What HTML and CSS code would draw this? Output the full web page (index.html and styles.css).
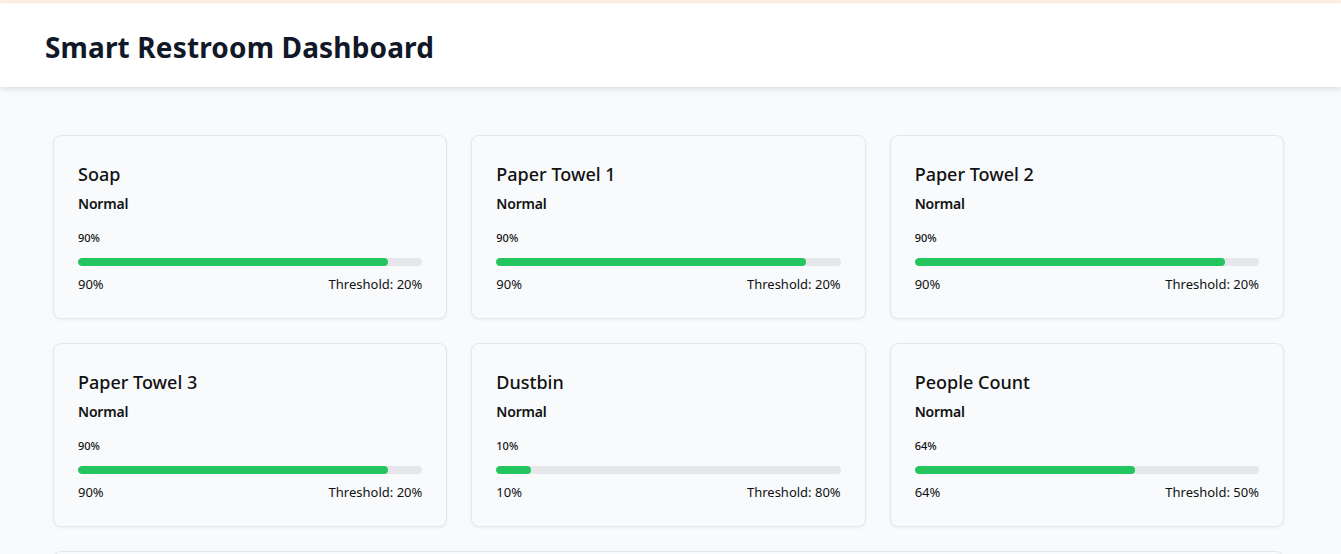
FILE: index.html
```html
<!DOCTYPE html>
<html lang="en">
<head>
<meta charset="utf-8">
<title>Smart Restroom Dashboard</title>
<link rel="stylesheet" href="styles.css">
</head>
<body>
<div class="topline"></div>
<header class="header">
  <h1 class="title">Smart Restroom Dashboard</h1>
</header>
<main class="main">
  <section class="grid">
    <div class="card">
      <h2 class="card-title">Soap</h2>
      <div class="status">Normal</div>
      <div class="value">90%</div>
      <div class="bar"><div class="fill" style="width:90%"></div></div>
      <div class="meta"><span>90%</span><span>Threshold: 20%</span></div>
    </div>
    <div class="card">
      <h2 class="card-title">Paper Towel 1</h2>
      <div class="status">Normal</div>
      <div class="value">90%</div>
      <div class="bar"><div class="fill" style="width:90%"></div></div>
      <div class="meta"><span>90%</span><span>Threshold: 20%</span></div>
    </div>
    <div class="card">
      <h2 class="card-title">Paper Towel 2</h2>
      <div class="status">Normal</div>
      <div class="value">90%</div>
      <div class="bar"><div class="fill" style="width:90%"></div></div>
      <div class="meta"><span>90%</span><span>Threshold: 20%</span></div>
    </div>
    <div class="card">
      <h2 class="card-title">Paper Towel 3</h2>
      <div class="status">Normal</div>
      <div class="value">90%</div>
      <div class="bar"><div class="fill" style="width:90%"></div></div>
      <div class="meta"><span>90%</span><span>Threshold: 20%</span></div>
    </div>
    <div class="card">
      <h2 class="card-title">Dustbin</h2>
      <div class="status">Normal</div>
      <div class="value">10%</div>
      <div class="bar"><div class="fill" style="width:10%"></div></div>
      <div class="meta"><span>10%</span><span>Threshold: 80%</span></div>
    </div>
    <div class="card">
      <h2 class="card-title">People Count</h2>
      <div class="status">Normal</div>
      <div class="value">64%</div>
      <div class="bar"><div class="fill" style="width:64%"></div></div>
      <div class="meta"><span>64%</span><span>Threshold: 50%</span></div>
    </div>
  </section>
  <section class="panel"></section>
</main>
</body>
</html>
```

FILE: styles.css
```css
* { box-sizing: border-box; }
html, body { margin: 0; padding: 0; }
body {
  background: #f8fafc;
  font-family: "Noto Sans", "Open Sans", sans-serif;
  color: #111;
  overflow: hidden;
}
.topline {
  height: 3px;
  background: #fdf0e6;
}
.header {
  background: #ffffff;
  height: 84px;
  display: flex;
  align-items: center;
  padding: 4px 45px 0;
  box-shadow: 0 2px 6px rgba(0, 0, 0, 0.12);
  position: relative;
  z-index: 1;
}
.title {
  margin: 0;
  font-size: 28px;
  font-weight: 700;
  color: #111827;
  letter-spacing: 0.15px;
}
.main {
  padding: 48px 57px 0 53px;
}
.grid {
  display: grid;
  grid-template-columns: repeat(3, 1fr);
  gap: 24px 24px;
}
.card {
  background: #f8fafc;
  border: 1px solid #e5e7eb;
  border-radius: 8px;
  padding: 24px 24px 24px;
  box-shadow: 0 1px 3px rgba(0, 0, 0, 0.06);
  height: 184px;
}
.card-title {
  margin: 0;
  font-size: 18px;
  line-height: 28px;
  font-weight: 500;
  color: #111;
}
.status {
  margin-top: 6px;
  font-size: 14px;
  line-height: 20px;
  font-weight: 600;
  letter-spacing: -0.2px;
}
.value {
  margin-top: 16px;
  font-size: 11px;
  line-height: 16px;
  font-weight: 500;
}
.bar {
  margin-top: 12px;
  height: 8px;
  border-radius: 4px;
  background: #e5e7eb;
  overflow: hidden;
}
.fill {
  height: 100%;
  background: #22c55e;
  border-radius: 4px;
}
.meta {
  margin-top: 8px;
  display: flex;
  justify-content: space-between;
  font-size: 13px;
  line-height: 20px;
  color: #111;
}
.panel {
  margin-top: 24px;
  height: 200px;
  background: #f8fafc;
  border: 1px solid #e5e7eb;
  border-radius: 8px;
  box-shadow: 0 1px 3px rgba(0, 0, 0, 0.06);
}
```
